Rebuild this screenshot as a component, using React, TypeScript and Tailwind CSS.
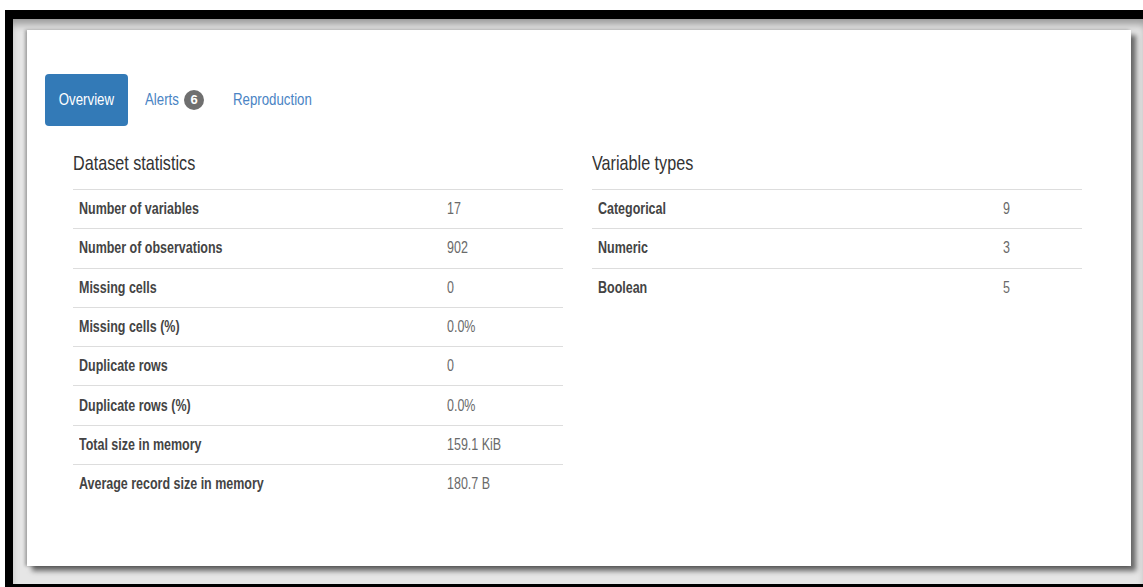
import React from "react";

// Report overview: nav pills plus two summary tables
const DATASET_STATS: [string, string][] = [
  ["Number of variables", "17"],
  ["Number of observations", "902"],
  ["Missing cells", "0"],
  ["Missing cells (%)", "0.0%"],
  ["Duplicate rows", "0"],
  ["Duplicate rows (%)", "0.0%"],
  ["Total size in memory", "159.1 KiB"],
  ["Average record size in memory", "180.7 B"],
];

const VARIABLE_TYPES: [string, string][] = [
  ["Categorical", "9"],
  ["Numeric", "3"],
  ["Boolean", "5"],
];

// narrow, tall lettering used across the report
const NARROW = "inline-block origin-left scale-x-[0.78] whitespace-nowrap";

function StatTable({
  title,
  rows,
  wide,
}: {
  title: string;
  rows: [string, string][];
  wide?: boolean;
}) {
  return (
    <div className="w-[490px]">
      <h4 className="mb-[6px] flex h-[40px] items-center text-[21px] font-normal text-[#333]">
        <span className="inline-block origin-left scale-x-[0.77] whitespace-nowrap">
          {title}
        </span>
      </h4>
      <div>
        {rows.map(([label, value]) => (
          <div
            key={label}
            className="flex h-[39.3px] items-center border-t border-[#dddddd]"
          >
            <div
              className={`${
                wide ? "w-[405px]" : "w-[368px]"
              } pl-[6px] text-[16px] font-bold text-[#444]`}
            >
              <span className={NARROW}>{label}</span>
            </div>
            <div className="pl-[6px] text-[16px] text-[#6a6a6a]">
              <span className={NARROW}>{value}</span>
            </div>
          </div>
        ))}
      </div>
    </div>
  );
}

export default function App() {
  return (
    <div className="h-[587px] w-[1143px] overflow-hidden bg-white pl-[5px] pt-[10px] font-['Liberation_Sans',Arial,sans-serif]">
      <div className="h-[577px] border-b-[3px] border-l-[8px] border-t-[9px] border-black bg-[#e6e6e6] pl-[14px] pt-[11px] shadow-[inset_0_8px_8px_-3px_rgba(0,0,0,0.35)]">
        <div className="h-[536px] w-[1104px] bg-white shadow-[5px_5px_5px_rgba(0,0,0,0.55),-2px_0_3px_rgba(0,0,0,0.3)]">
          {/* nav pills */}
          <div className="flex items-center pl-[18px] pt-[44px]">
            <div className="flex h-[52px] w-[83px] items-center justify-center rounded-[4px] bg-[#337ab7] text-[17px] text-white">
              <span className="inline-block scale-x-[0.78] whitespace-nowrap">
                Overview
              </span>
            </div>
            <div className="ml-[17px] flex items-center text-[17px] text-[#4a84c4]">
              <span className="w-[39px]">
                <span className={NARROW}>Alerts</span>
              </span>
              <span className="flex h-[20px] w-[20px] items-center justify-center rounded-full bg-[#6f6f6f] text-[13px] font-bold text-white">
                6
              </span>
            </div>
            <div className="ml-[29px] text-[17px] text-[#4a84c4]">
              <span className={NARROW}>Reproduction</span>
            </div>
          </div>

          {/* summary tables */}
          <div className="ml-[46px] mt-[17px] flex gap-[29px]">
            <StatTable title="Dataset statistics" rows={DATASET_STATS} />
            <StatTable title="Variable types" rows={VARIABLE_TYPES} wide />
          </div>
        </div>
      </div>
    </div>
  );
}
